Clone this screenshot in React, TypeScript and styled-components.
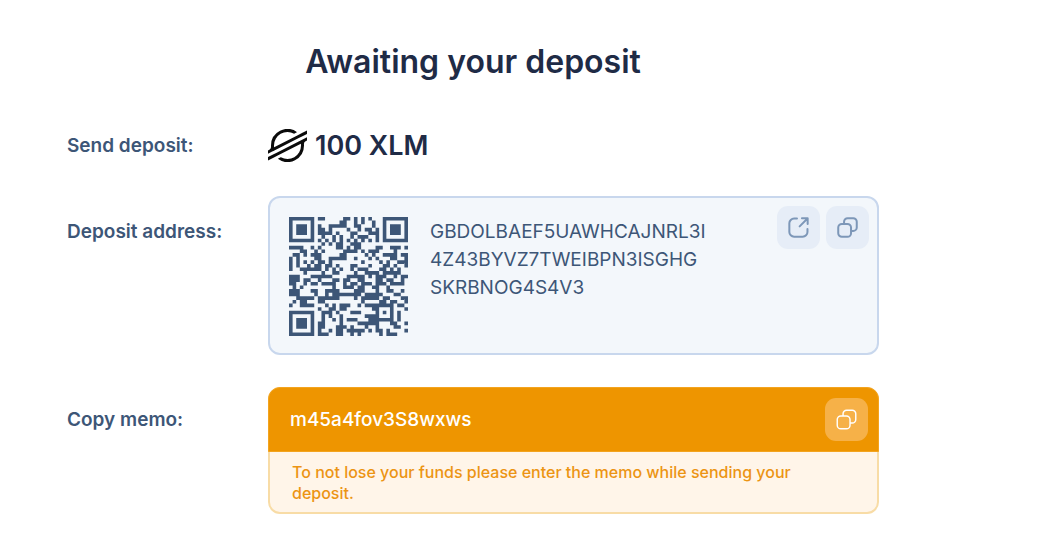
import React from "react";
import styled, { createGlobalStyle } from "styled-components";

const ADDRESS_LINES = ["GBDOLBAEF5UAWHCAJNRL3I", "4Z43BYVZ7TWEIBPN3ISGHG", "SKRBNOG4S4V3"];
const ADDRESS = ADDRESS_LINES.join("");
const MEMO = "m45a4fov3S8wxws";

/* ---- QR code: version 4, error correction L, byte mode, mask 3 ---- */

const QR_SIZE = 33;
const DATA_WORDS = 80;
const EC_WORDS = 20;
const FORMAT_BITS = 0b111100010011101;

function multiply(x: number, y: number): number {
  let z = 0;
  for (let i = 7; i >= 0; i--) {
    z = (z << 1) ^ ((z >>> 7) * 0x11d);
    z ^= ((y >>> i) & 1) * x;
  }
  return z;
}

function errorWords(data: number[]): number[] {
  const divisor: number[] = new Array(EC_WORDS).fill(0);
  divisor[EC_WORDS - 1] = 1;
  let root = 1;
  for (let i = 0; i < EC_WORDS; i++) {
    for (let j = 0; j < EC_WORDS; j++) {
      divisor[j] = multiply(divisor[j], root);
      if (j + 1 < EC_WORDS) divisor[j] ^= divisor[j + 1];
    }
    root = multiply(root, 2);
  }
  const rest: number[] = new Array(EC_WORDS).fill(0);
  for (const b of data) {
    const factor = b ^ (rest.shift() as number);
    rest.push(0);
    divisor.forEach((d, i) => {
      rest[i] ^= multiply(d, factor);
    });
  }
  return rest;
}

function encode(text: string): boolean[][] {
  const bits: number[] = [];
  const push = (value: number, length: number) => {
    for (let i = length - 1; i >= 0; i--) bits.push((value >>> i) & 1);
  };
  push(4, 4);
  push(text.length, 8);
  for (const c of text) push(c.charCodeAt(0), 8);
  push(0, 4);
  for (let pad = 0xec; bits.length < DATA_WORDS * 8; pad ^= 0xec ^ 0x11) push(pad, 8);

  const data: number[] = [];
  for (let i = 0; i < bits.length; i += 8) data.push(parseInt(bits.slice(i, i + 8).join(""), 2));
  const words = data.concat(errorWords(data));

  const grid: boolean[][] = Array.from({ length: QR_SIZE }, () => new Array(QR_SIZE).fill(false));
  const fixed: boolean[][] = Array.from({ length: QR_SIZE }, () => new Array(QR_SIZE).fill(false));
  const set = (x: number, y: number, dark: boolean) => {
    if (x < 0 || y < 0 || x >= QR_SIZE || y >= QR_SIZE) return;
    grid[y][x] = dark;
    fixed[y][x] = true;
  };

  for (let i = 0; i < QR_SIZE; i++) {
    set(6, i, i % 2 === 0);
    set(i, 6, i % 2 === 0);
  }
  for (const [cx, cy] of [[3, 3], [QR_SIZE - 4, 3], [3, QR_SIZE - 4]]) {
    for (let dy = -4; dy <= 4; dy++) {
      for (let dx = -4; dx <= 4; dx++) {
        const d = Math.max(Math.abs(dx), Math.abs(dy));
        set(cx + dx, cy + dy, d !== 2 && d !== 4);
      }
    }
  }
  for (let dy = -2; dy <= 2; dy++) {
    for (let dx = -2; dx <= 2; dx++) set(26 + dx, 26 + dy, Math.max(Math.abs(dx), Math.abs(dy)) !== 1);
  }

  const format = (i: number) => ((FORMAT_BITS >>> i) & 1) === 1;
  for (let i = 0; i <= 5; i++) set(8, i, format(i));
  set(8, 7, format(6));
  set(8, 8, format(7));
  set(7, 8, format(8));
  for (let i = 9; i < 15; i++) set(14 - i, 8, format(i));
  for (let i = 0; i < 8; i++) set(QR_SIZE - 1 - i, 8, format(i));
  for (let i = 8; i < 15; i++) set(8, QR_SIZE - 15 + i, format(i));
  set(8, QR_SIZE - 8, true);

  let n = 0;
  for (let right = QR_SIZE - 1; right >= 1; right -= 2) {
    if (right === 6) right = 5;
    for (let v = 0; v < QR_SIZE; v++) {
      for (let j = 0; j < 2; j++) {
        const x = right - j;
        const y = ((right + 1) & 2) === 0 ? QR_SIZE - 1 - v : v;
        if (fixed[y][x]) continue;
        const bit = n < words.length * 8 && ((words[n >>> 3] >>> (7 - (n & 7))) & 1) === 1;
        n++;
        grid[y][x] = bit !== ((x + y) % 3 === 0);
      }
    }
  }
  return grid;
}

function qrPath(text: string): string {
  return encode(text)
    .map((row, y) => row.map((dark, x) => (dark ? `M${x} ${y}h1v1h-1z` : "")).join(""))
    .join("");
}

/* ---- Styles ---- */

const GlobalStyle = createGlobalStyle`
  * { box-sizing: border-box; }
  body { margin: 0; background: #ffffff; font-family: Inter, "Liberation Sans", sans-serif; }
`;

const Page = styled.main`
  padding: 41px 159px 40px 67px;
  color: #3d5677;
`;

const Title = styled.h1`
  margin: 0;
  font-size: 32px;
  line-height: 42px;
  font-weight: 600;
  text-align: center;
  color: #1f2b46;
`;

const Details = styled.dl`
  margin: 44px 0 0;
  display: grid;
  gap: 32px;
`;

const Row = styled.div`
  display: grid;
  grid-template-columns: 201px minmax(0, 1fr);
`;

const Label = styled.dt<{ $top: number }>`
  padding-top: ${(p) => p.$top}px;
  font-size: 19px;
  line-height: 28px;
  font-weight: 600;
`;

const Value = styled.dd`
  margin: 0;
`;

const Amount = styled.div`
  display: flex;
  align-items: center;
  gap: 8px;
  height: 37px;
  font-size: 27px;
  font-weight: 600;
  color: #1f2b46;
`;

const AddressCard = styled.div`
  display: flex;
  align-items: flex-start;
  border: 2px solid #c8d7ed;
  border-radius: 12px;
  background: #f3f7fb;
  padding: 8px 8px 17px 19px;
`;

const QrCode = styled.svg`
  flex: none;
  width: 119px;
  height: 119px;
  margin-top: 11px;
  fill: #3d5677;
`;

const Address = styled.div`
  flex: 1;
  padding: 12px 0 0 22px;
  font-size: 19px;
  line-height: 28px;
  font-weight: 400;
`;

const Actions = styled.div`
  display: flex;
  gap: 6px;
`;

const IconButton = styled.button<{ $tone: "blue" | "amber" }>`
  flex: none;
  display: flex;
  align-items: center;
  justify-content: center;
  width: 43px;
  height: 43px;
  padding: 0;
  border: 0;
  border-radius: 11px;
  cursor: pointer;
  color: ${(p) => (p.$tone === "blue" ? "#7d97b8" : "#ffffff")};
  background: ${(p) => (p.$tone === "blue" ? "#e6edf7" : "#f6b148")};
`;

const MemoCard = styled.div`
  border: 2px solid #f8dca6;
  border-radius: 12px;
  background: #fff5e9;
`;

const MemoBar = styled.div`
  display: flex;
  align-items: center;
  justify-content: space-between;
  height: 65px;
  margin: -2px -2px 0;
  padding: 0 10px 0 21px;
  border: 1px solid #f3a41f;
  border-radius: 12px 12px 0 0;
  background: #ee9500;
  color: #ffffff;
  font-size: 19px;
  font-weight: 500;
`;

const Warning = styled.p`
  margin: 0;
  padding: 10px 60px 8px 22px;
  font-size: 16px;
  line-height: 21px;
  font-weight: 500;
  color: #ec9413;
`;

const StellarLogo = () => (
  <svg width="39" height="33" viewBox="0 0 236.36 200" fill="#0b0b0b" aria-hidden="true">
    <path d="M203,26.16l-28.46,14.5-137.43,70a82.49,82.49,0,0,1-.7-10.69A81.87,81.87,0,0,1,158.2,28.6l16.29-8.3,2.43-1.24A100,100,0,0,0,18.18,100q0,3.82.29,7.61a18.19,18.19,0,0,1-9.88,17.58L0,129.57V150l25.29-12.89,0,0,8.19-4.18,8.07-4.11v0L186.43,55l16.28-8.29,33.65-17.15V9.14Z" />
    <path d="M236.36,50,49.78,145,33.5,153.31,0,170.38v20.41l33.27-16.95,28.46-14.5L199.3,89.24A83.45,83.45,0,0,1,200,100,81.87,81.87,0,0,1,78.09,171.36l-1,.53-17.66,9A100,100,0,0,0,218.18,100c0-2.57-.1-5.14-.29-7.68a18.2,18.2,0,0,1,9.87-17.58l8.6-4.38Z" />
  </svg>
);

const CopyIcon = ({ stroke }: { stroke: number }) => (
  <svg width="21" height="21" viewBox="0 0 22 22" fill="none" stroke="currentColor" strokeWidth={stroke} aria-hidden="true">
    <rect x="1.3" y="7.3" width="13.4" height="13.4" rx="3.8" />
    <path d="M7.4 7.3V5a3.7 3.7 0 0 1 3.7-3.7H17A3.7 3.7 0 0 1 20.7 5v5.9a3.7 3.7 0 0 1-3.7 3.7h-2.3" />
  </svg>
);

const OpenIcon = () => (
  <svg width="21" height="21" viewBox="0 0 22 22" fill="none" stroke="currentColor" strokeWidth="2.1" strokeLinecap="round" strokeLinejoin="round" aria-hidden="true">
    <path d="M9.4 1.6H6.4a5 5 0 0 0-5 5v9a5 5 0 0 0 5 5h9a5 5 0 0 0 5-5v-3" />
    <path d="M12.2 9.8l8.2-8.2M14.6 1.4h6v6" />
  </svg>
);

export default function App() {
  return (
    <>
      <GlobalStyle />
      <Page>
        <Title>Awaiting your deposit</Title>
        <Details>
          <Row>
            <Label $top={5}>Send deposit:</Label>
            <Value>
              <Amount>
                <StellarLogo />
                100 XLM
              </Amount>
            </Value>
          </Row>
          <Row>
            <Label $top={22}>Deposit address:</Label>
            <Value>
              <AddressCard>
                <QrCode viewBox={`0 0 ${QR_SIZE} ${QR_SIZE}`} role="img" aria-label="Deposit address QR code">
                  <path d={qrPath(ADDRESS)} />
                </QrCode>
                <Address>
                  {ADDRESS_LINES.map((line) => (
                    <div key={line}>{line}</div>
                  ))}
                </Address>
                <Actions>
                  <IconButton type="button" $tone="blue" aria-label="Open address">
                    <OpenIcon />
                  </IconButton>
                  <IconButton type="button" $tone="blue" aria-label="Copy address">
                    <CopyIcon stroke={2.1} />
                  </IconButton>
                </Actions>
              </AddressCard>
            </Value>
          </Row>
          <Row>
            <Label $top={19}>Copy memo:</Label>
            <Value>
              <MemoCard>
                <MemoBar>
                  {MEMO}
                  <IconButton type="button" $tone="amber" aria-label="Copy memo">
                    <CopyIcon stroke={1.5} />
                  </IconButton>
                </MemoBar>
                <Warning>To not lose your funds please enter the memo while sending your deposit.</Warning>
              </MemoCard>
            </Value>
          </Row>
        </Details>
      </Page>
    </>
  );
}
